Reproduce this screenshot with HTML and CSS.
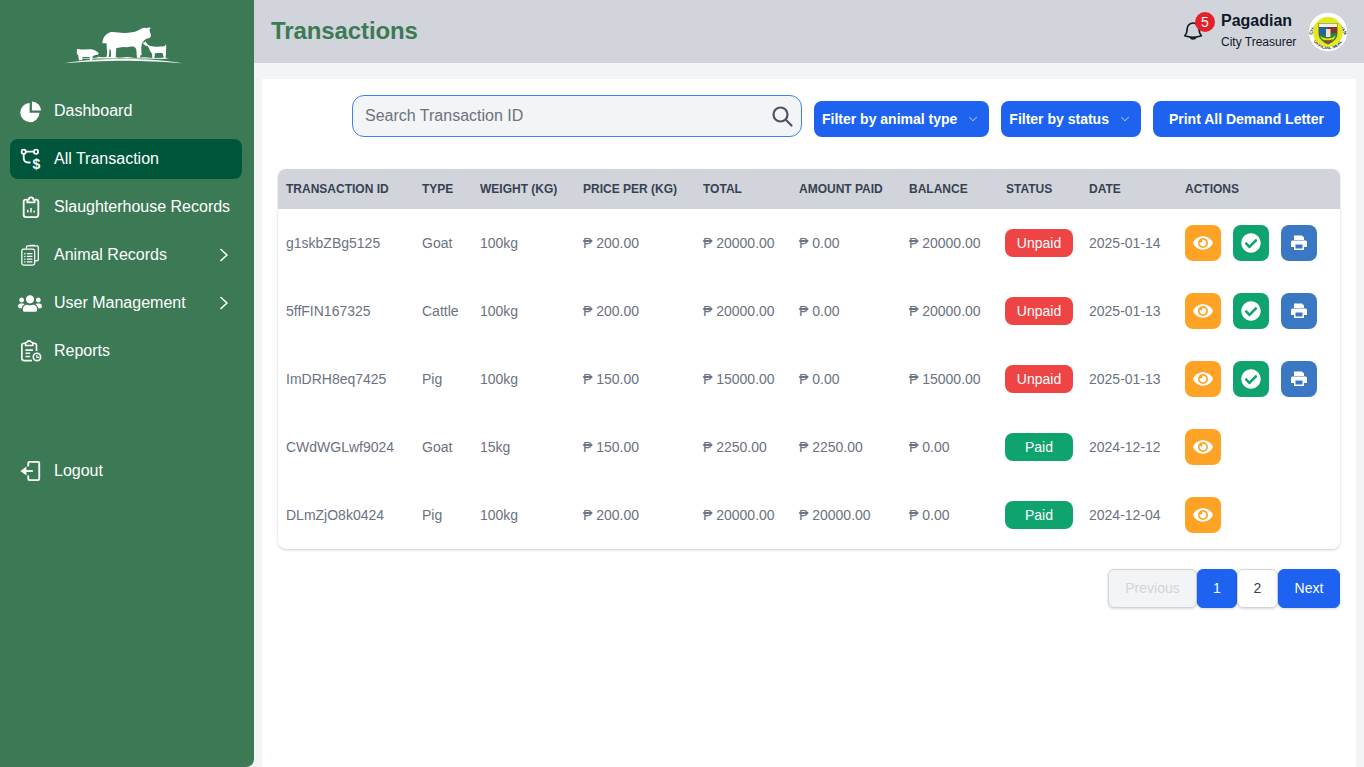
FILE: index.html
```html
<!DOCTYPE html>
<html lang="en">
<head>
<meta charset="utf-8">
<title>Transactions</title>
<link rel="stylesheet" href="styles.css">
</head>
<body>
<svg class="defs" width="0" height="0" aria-hidden="true">
  <symbol id="i-eye" viewBox="0 0 576 512"><path fill="currentColor" d="M572.52 241.4C518.29 135.59 410.93 64 288 64S57.68 135.64 3.48 241.41a32.35 32.35 0 0 0 0 29.19C57.71 376.41 165.07 448 288 448s230.32-71.64 284.52-177.41a32.35 32.35 0 0 0 0-29.19zM288 400a144 144 0 1 1 144-144 143.93 143.93 0 0 1-144 144zm0-240a95.31 95.31 0 0 0-25.31 3.79 47.85 47.85 0 0 1-66.9 66.9A95.78 95.78 0 1 0 288 160z"/></symbol>
  <symbol id="i-check" viewBox="0 0 512 512"><path fill="currentColor" d="M504 256c0 136.967-111.033 248-248 248S8 392.967 8 256 119.033 8 256 8s248 111.033 248 248zM227.314 387.314l184-184c6.248-6.248 6.248-16.379 0-22.627l-22.627-22.627c-6.248-6.249-16.379-6.249-22.628 0L216 308.118l-70.059-70.059c-6.248-6.248-16.379-6.248-22.628 0l-22.627 22.627c-6.248 6.248-6.248 16.379 0 22.627l104 104c6.249 6.249 16.379 6.249 22.628.001z"/></symbol>
  <symbol id="i-print" viewBox="0 0 16 16"><path fill="currentColor" fill-rule="evenodd" d="M3 .5h8l2 2V5H3zM1.500 5.500h13A1.500 1.500 0 0 1 16 7v5h-3v3H3v-3H0V7a1.500 1.500 0 0 1 1.500-1.500zM4.500 9.500v4h7v-4z"/></symbol>
  <symbol id="i-chev" viewBox="0 0 20 20"><path fill="none" stroke="currentColor" stroke-width="1.500" stroke-linecap="round" stroke-linejoin="round" d="M5 7.500l5 5 5-5"/></symbol>
  <symbol id="i-right" viewBox="0 0 12 16"><path fill="none" stroke="currentColor" stroke-width="1.600" stroke-linecap="round" stroke-linejoin="round" d="M3 2.500l6 5.500-6 5.500"/></symbol>
</svg>

<div class="app">
  <aside class="sidebar">
    <div class="logo">
      <svg width="126" height="44" viewBox="0 0 378 132">
        <g fill="#fff">
          <path d="M127 64C128 50 134 38 150 31c15-3 30 3 45 2 14-1 28-3 38-7 7-4 13-9 22-9l5 2 8-3 4 3-4 4 2 6c1 6 4 11 2 15-3 5-9 4-14 7-6 3-11 9-13 18-2 8-1 18 0 30h-3l-2 8h-9l-2-24c-1-5-4-8-8-9-8-1-16 3-28 1-7-1-15 2-24 3-1 9-1 20-2 29h-14c0-9 0-16-1-24l-3-3-2 20-2 8-6-1 2-10c1-10-2-23-1-33z"/>
          <path d="M51 80c10 3 22 3 34 2 9-1 17 1 23 5l8 6-2 5-10 2-6 3-1 11h-7l-1-9H68l-2 10h-9l-2-14-4-6c-1-5-1-10 1-15z"/>
          <path d="M250 66l1-7 4 3 2-5 2 6 7 7c5 3 12 4 20 4 10 0 20 0 28-2l4-5 1 8-1 9c0 8 0 16-1 24h-6l-3-14-7-2-16 2-2 15h-6l-1-14c-4-4-7-10-9-16l-4-7-6-1z"/>
          <path d="M14 124c40-9 104-13 176-13s134 4 177 13c-52-5-116-8-177-8S66 119 14 124z"/>
          <path d="M48 110c20-2 40-3 60-3l8-3 12 2 30-2 20 3 24-2 24 3 26-2 26 2 34-1 16 4c-90-2-190-2-280-1z"/>
        </g>
      </svg>
    </div>
    <nav class="nav">
      <a class="nav-item"><svg class="nav-icon" viewBox="0 0 24 24"><path fill="#fff" d="M10.500 3.200A10.500 10.500 0 1 0 21.300 14H10.500z"/><path fill="#fff" d="M13 1.500V11.500h10A10.500 10.500 0 0 0 13 1.500z"/></svg><span>Dashboard</span></a>
      <a class="nav-item active"><svg class="nav-icon" viewBox="0 0 22 22" fill="none" stroke="#fff" stroke-width="1.800"><circle cx="3.700" cy="3.700" r="2.100"/><circle cx="16" cy="3.700" r="2.100"/><path d="M5.800 3.700h8.100M3.700 5.800v4.200c0 3 1.800 4.500 4.500 4.500h2.300"/><text x="12.500" y="20.500" class="dollar">$</text></svg><span>All Transaction</span></a>
      <a class="nav-item"><svg class="nav-icon" viewBox="0 0 24 24" fill="none" stroke="#fff" stroke-width="2" stroke-linejoin="round"><path d="M8 4H6.500A2.500 2.500 0 0 0 4 6.500v14A2.500 2.500 0 0 0 6.500 23h11a2.500 2.500 0 0 0 2.500-2.500v-14A2.500 2.500 0 0 0 17.500 4H16"/><path d="M8 5.500c0-1 .5-1.500 1.500-1.500C9.500 2.500 10.500 1.500 12 1.500s2.500 1 2.500 2.500c1 0 1.500.5 1.500 1.500V7H8z"/><path stroke-width="1.600" d="M8.500 18v-3M12 18v-5M15.500 18v-2"/></svg><span>Slaughterhouse Records</span></a>
      <a class="nav-item has-sub"><svg class="nav-icon" viewBox="0 0 24 24" fill="none" stroke="#fff" stroke-width="1.400" stroke-linejoin="round"><path d="M7 5V3.500A1.500 1.500 0 0 1 8.500 2h10A1.500 1.500 0 0 1 20 3.500V17a1.500 1.500 0 0 1-1.500 1.500H16"/><path d="M11 2.500v-1h5v1"/><rect x="2" y="5.500" width="14" height="17.500" rx="2"/><path stroke-width="1.500" d="M7.500 10.500h6M7.500 13.500h6M7.500 16.500h6M7.500 19.500h6M4.500 10.500h1.500M4.500 13.500h1.500M4.500 16.500h1.500M4.500 19.500h1.500"/></svg><span>Animal Records</span><svg class="chev-right"><use href="#i-right"/></svg></a>
      <a class="nav-item has-sub"><svg class="nav-icon wide" viewBox="0 0 640 512"><path fill="#fff" d="M96 224c35.300 0 64-28.700 64-64s-28.700-64-64-64-64 28.700-64 64 28.700 64 64 64zm448 0c35.300 0 64-28.700 64-64s-28.700-64-64-64-64 28.700-64 64 28.700 64 64 64zm32 32h-64c-17.600 0-33.500 7.100-45.100 18.600 40.300 22.100 68.900 62 75.100 109.400h66c17.700 0 32-14.300 32-32v-32c0-35.300-28.700-64-64-64zm-256 0c61.900 0 112-50.100 112-112S381.900 32 320 32 208 82.100 208 144s50.100 112 112 112zm76.800 32h-8.300c-20.800 10-43.900 16-68.500 16s-47.600-6-68.500-16h-8.300C179.600 288 128 339.600 128 403.200V432c0 26.500 21.500 48 48 48h288c26.500 0 48-21.500 48-48v-28.800c0-63.600-51.600-115.200-115.200-115.200zm-223.700-13.400C161.500 263.100 145.600 256 128 256H64c-35.300 0-64 28.700-64 64v32c0 17.700 14.300 32 32 32h65.900c6.300-47.400 34.900-87.300 75.200-109.400z"/></svg><span>User Management</span><svg class="chev-right"><use href="#i-right"/></svg></a>
      <a class="nav-item"><svg class="nav-icon" viewBox="0 0 24 24" fill="none" stroke="#fff" stroke-width="1.800" stroke-linejoin="round"><path d="M13 22.500H4.500A2.500 2.500 0 0 1 2 20V6a2.500 2.500 0 0 1 2.500-2.500H6M14 3.500h1.500A2.500 2.500 0 0 1 18 6v6"/><path d="M6 3.500C6 2.500 7 2.500 7.500 2.500 8 1.500 9 1 10 1s2 .5 2.500 1.500c.5 0 1.500 0 1.500 1V6H6z"/><path d="M6 11h8M6 14.500h5M6 18h5"/><circle cx="18.500" cy="18.500" r="4" fill="#3c7a55"/><path stroke-width="1.200" d="M18.500 16v3h2.500"/></svg><span>Reports</span></a>
      <a class="nav-item logout"><svg class="nav-icon" viewBox="0 0 24 24" fill="none" stroke="#fff" stroke-width="2" stroke-linejoin="round"><path d="M9 7V3.500A1.500 1.500 0 0 1 10.500 2h9A1.500 1.500 0 0 1 21 3.500v17a1.500 1.500 0 0 1-1.500 1.500h-9A1.500 1.500 0 0 1 9 20.500V17"/><path d="M14 12H5"/><path fill="#fff" stroke="none" d="M0.500 12L7 7v10z"/></svg><span>Logout</span></a>
    </nav>
  </aside>

  <div class="main">
    <header class="topbar">
      <h1 class="title">Transactions</h1>
      <div class="top-right">
        <div class="bell">
          <svg width="24" height="24" viewBox="0 0 24 24" fill="none" stroke="#111827" stroke-width="1.700" stroke-linecap="round" stroke-linejoin="round"><path d="M14.900 17.100a23.800 23.800 0 0 0 5.500-1.300 9 9 0 0 1-2.300-6V9a6 6 0 0 0-12 0v.8a9 9 0 0 1-2.300 6 23.800 23.800 0 0 0 5.500 1.300m5.600 0a24.300 24.300 0 0 1-5.600 0m5.600 0a3 3 0 0 1-5.600 0"/></svg>
          <span class="badge-count">5</span>
        </div>
        <div class="user">
          <div class="user-name">Pagadian</div>
          <div class="user-role">City Treasurer</div>
        </div>
        <svg class="seal" width="40" height="40" viewBox="0 0 40 40">
          <defs>
            <path id="seal-top" d="M3.600 24A16.900 16.900 0 0 1 36.400 24"/>
            <path id="seal-bot" d="M5 28.500A17.300 17.300 0 0 0 35 28.500"/>
          </defs>
          <circle cx="20" cy="20" r="19.700" fill="#fff" stroke="#b8bcc2" stroke-width=".5"/>
          <text class="seal-text"><textPath href="#seal-top" startOffset="50%" text-anchor="middle">CITY OF PAGADIAN</textPath></text>
          <text class="seal-text"><textPath href="#seal-bot" startOffset="50%" text-anchor="middle">OFFICIAL SEAL</textPath></text>
          <circle cx="20" cy="20" r="15" fill="#e6e81c"/>
          <path d="M10.500 11h19v10c0 6-4 9-9.500 11.500C14.500 30 10.500 27 10.500 21z" fill="#2f7d3a"/>
          <path d="M11 11.500h18v3.500H11z" fill="#f4f1d8"/>
          <path d="M11 15h9v8h-9z" fill="#2d5f9e"/>
          <path d="M20 15h9v6h-9z" fill="#8c2f2f"/>
          <path d="M18 17h4.500v8H18z" fill="#e9e4d0"/>
          <path d="M12 24c4 3.500 12 3.500 16-1l-2 4c-3 2.500-9 2.500-12 0z" fill="#e6e81c"/>
          <path d="M15.500 27.500c3 1.200 6 1.200 9.500-.5l-3 3c-1.500 1-3.500 1-4.500 0z" fill="#b8352f"/>
        </svg>
      </div>
    </header>

    <main class="content">
      <div class="toolbar">
        <div class="search">
          <input class="search-input" type="text" placeholder="Search Transaction ID">
          <svg class="search-icon" width="22" height="22" viewBox="0 0 22 22" fill="none" stroke="#4b5563" stroke-width="2.200" stroke-linecap="round"><circle cx="9.500" cy="9.500" r="7"/><path d="M15 15l5.500 5.500"/></svg>
        </div>
        <button class="btn filter">Filter by animal type<svg class="chev"><use href="#i-chev"/></svg></button>
        <button class="btn filter">Filter by status<svg class="chev"><use href="#i-chev"/></svg></button>
        <button class="btn print-all">Print All Demand Letter</button>
      </div>

      <div class="table-card">
        <table class="table">
          <thead>
            <tr><th class="c-id">Transaction ID</th><th class="c-type">Type</th><th class="c-weight">Weight (kg)</th><th class="c-price">Price per (kg)</th><th class="c-total">Total</th><th class="c-paid">Amount Paid</th><th class="c-bal">Balance</th><th class="c-status">Status</th><th class="c-date">Date</th><th>Actions</th></tr>
          </thead>
          <tbody>
            <tr><td>g1skbZBg5125</td><td>Goat</td><td>100kg</td><td>₱ 200.00</td><td>₱ 20000.00</td><td>₱ 0.00</td><td>₱ 20000.00</td><td><span class="status unpaid">Unpaid</span></td><td>2025-01-14</td><td><div class="actions"><button class="act view"><svg class="ic-eye"><use href="#i-eye"/></svg></button><button class="act ok"><svg class="ic-check"><use href="#i-check"/></svg></button><button class="act prn"><svg class="ic-print"><use href="#i-print"/></svg></button></div></td></tr>
            <tr><td>5ffFIN167325</td><td>Cattle</td><td>100kg</td><td>₱ 200.00</td><td>₱ 20000.00</td><td>₱ 0.00</td><td>₱ 20000.00</td><td><span class="status unpaid">Unpaid</span></td><td>2025-01-13</td><td><div class="actions"><button class="act view"><svg class="ic-eye"><use href="#i-eye"/></svg></button><button class="act ok"><svg class="ic-check"><use href="#i-check"/></svg></button><button class="act prn"><svg class="ic-print"><use href="#i-print"/></svg></button></div></td></tr>
            <tr><td>ImDRH8eq7425</td><td>Pig</td><td>100kg</td><td>₱ 150.00</td><td>₱ 15000.00</td><td>₱ 0.00</td><td>₱ 15000.00</td><td><span class="status unpaid">Unpaid</span></td><td>2025-01-13</td><td><div class="actions"><button class="act view"><svg class="ic-eye"><use href="#i-eye"/></svg></button><button class="act ok"><svg class="ic-check"><use href="#i-check"/></svg></button><button class="act prn"><svg class="ic-print"><use href="#i-print"/></svg></button></div></td></tr>
            <tr><td>CWdWGLwf9024</td><td>Goat</td><td>15kg</td><td>₱ 150.00</td><td>₱ 2250.00</td><td>₱ 2250.00</td><td>₱ 0.00</td><td><span class="status paid">Paid</span></td><td>2024-12-12</td><td><div class="actions"><button class="act view"><svg class="ic-eye"><use href="#i-eye"/></svg></button></div></td></tr>
            <tr><td>DLmZjO8k0424</td><td>Pig</td><td>100kg</td><td>₱ 200.00</td><td>₱ 20000.00</td><td>₱ 20000.00</td><td>₱ 0.00</td><td><span class="status paid">Paid</span></td><td>2024-12-04</td><td><div class="actions"><button class="act view"><svg class="ic-eye"><use href="#i-eye"/></svg></button></div></td></tr>
          </tbody>
        </table>
      </div>

      <div class="pager">
        <button class="page prev">Previous</button>
        <button class="page current">1</button>
        <button class="page num">2</button>
        <button class="page next">Next</button>
      </div>
    </main>
  </div>
</div>
</body>
</html>
```

FILE: styles.css
```css
* { box-sizing: border-box; }
html, body { margin: 0; height: 100%; }
body {
  font-family: "Liberation Sans", Arial, sans-serif;
  background: #f3f4f6;
  overflow: hidden;
}
.defs { position: absolute; }
.app { display: flex; height: 767px; }

/* Sidebar */
.sidebar {
  width: 254px;
  flex: none;
  background: #3c7a55;
  border-radius: 0 0 8px 0;
  padding: 22px 12px 0 10px;
  color: #fff;
}
.logo { height: 69px; margin-left: 50px; }
.logo svg { display: block; }
.nav { display: flex; flex-direction: column; gap: 8px; }
.nav-item {
  display: flex;
  align-items: center;
  height: 40px;
  padding: 0 10px;
  border-radius: 8px;
  font-size: 16px;
  color: #fff;
}
.nav-item.active { background: #00563b; }
.nav-icon { width: 22px; height: 22px; flex: none; margin-right: 12px; overflow: visible; }
.nav-icon.wide { width: 24px; height: 19px; margin-left: -2px; margin-right: 12px; }
.dollar { font: bold 14px "Liberation Sans", Arial, sans-serif; fill: #fff; stroke: none; }
.chev-right { width: 12px; height: 16px; margin-left: auto; margin-right: 2px; color: #fff; }
.logout { margin-top: 72px; }

/* Main */
.main { flex: 1; display: flex; flex-direction: column; min-width: 0; }
.topbar {
  height: 63px;
  flex: none;
  background: #d1d5db;
  display: flex;
  align-items: center;
  justify-content: space-between;
  padding: 0 16px 0 17px;
}
.title { margin: 0 0 2px; font-size: 24px; font-weight: 700; color: #3c7a55; letter-spacing: -.1px; }
.top-right { display: flex; align-items: center; }
.bell { position: relative; width: 24px; height: 24px; margin-right: 17px; }
.bell svg { display: block; transform: translateX(1px); }
.badge-count {
  position: absolute;
  left: 15px;
  top: -8px;
  width: 20px;
  height: 20px;
  border-radius: 50%;
  background: #e5202a;
  color: #fff;
  font-size: 14px;
  line-height: 20px;
  text-align: center;
}
.user { width: 87px; }
.user-name { font-size: 16px; font-weight: 700; color: #111827; line-height: 20px; }
.user-role { font-size: 12px; color: #111827; line-height: 20px; margin-top: 1px; }
.seal { display: block; }
.seal-text { font: bold 4.500px "Liberation Sans", Arial, sans-serif; fill: #1f2937; }

/* Content */
.content {
  flex: 1;
  margin: 16px 8px 0;
  background: #fff;
  padding: 16px;
}
.toolbar { display: flex; justify-content: flex-end; align-items: flex-end; gap: 12px; }
.search { position: relative; width: 450px; height: 42px; }
.search-input {
  width: 100%;
  height: 100%;
  padding: 0 44px 0 12px;
  border: 1px solid #3b82f6;
  border-radius: 12px;
  background: #f3f4f6;
  font: 16px "Liberation Sans", Arial, sans-serif;
  color: #374151;
  outline: none;
}
.search-input::placeholder { color: #6b7280; opacity: 1; }
.search-icon { position: absolute; right: 9px; top: 10px; }
.btn {
  height: 36px;
  border: 0;
  border-radius: 8px;
  background: #1d63f0;
  color: #fff;
  font: bold 14px "Liberation Sans", Arial, sans-serif;
  display: flex;
  align-items: center;
}
.filter { padding: 0 8px; }
.chev { width: 14px; height: 14px; margin-left: 9px; margin-right: 1px; color: #a9c3f5; }
.print-all { padding: 0 16px; }

/* Table */
.table-card {
  margin-top: 32px;
  border-radius: 8px;
  overflow: hidden;
  background: #fff;
  box-shadow: 0 1px 3px rgba(0,0,0,.12), 0 1px 2px rgba(0,0,0,.08);
}
.table { width: 100%; border-collapse: collapse; table-layout: fixed; }
.table th {
  height: 40px;
  padding: 0 8px;
  background: #d1d5db;
  color: #374151;
  font-size: 12px;
  font-weight: 700;
  text-align: left;
  text-transform: uppercase;
  white-space: nowrap;
}
.table td {
  height: 68px;
  padding: 0 8px;
  font-size: 14px;
  color: #6b7280;
  white-space: nowrap;
}
.c-id { width: 136px; }
.c-type { width: 58px; }
.c-weight { width: 103px; }
.c-price { width: 120px; }
.c-total { width: 96px; }
.c-paid { width: 110px; }
.c-bal { width: 97px; }
.c-status { width: 83px; }
.c-date { width: 96px; }

.status {
  display: block;
  width: 68px;
  height: 28px;
  margin-left: -1px;
  border-radius: 8px;
  color: #fff;
  font-size: 14px;
  line-height: 28px;
  text-align: center;
}
.unpaid { background: #ef4444; }
.paid { background: #0fa36e; }
.actions { display: flex; gap: 12px; }
.act {
  width: 36px;
  height: 36px;
  padding: 0;
  border: 0;
  border-radius: 8px;
  display: flex;
  align-items: center;
  justify-content: center;
  color: #fff;
}
.view { background: #ffa326; }
.ok { background: #0fa36e; }
.prn { background: #3b78c4; }
.ic-eye { width: 20px; height: 18px; }
.ic-check { width: 20px; height: 20px; }
.ic-print { width: 16px; height: 16px; }

/* Pagination */
.pager { display: flex; justify-content: flex-end; margin-top: 20px; }
.page {
  height: 39px;
  padding: 0 0 1px;
  border-radius: 6px;
  border: 1px solid #d1d5db;
  font: 14px "Liberation Sans", Arial, sans-serif;
  box-shadow: 0 1px 3px rgba(0,0,0,.15);
}
.prev { width: 89px; background: #f3f4f6; color: #d1d5db; }
.current { width: 40px; background: #1d63f0; border-color: #1d63f0; color: #fff; }
.num { width: 41px; background: #fff; color: #374151; }
.next { width: 62px; background: #1d63f0; border-color: #1d63f0; color: #fff; }
```
